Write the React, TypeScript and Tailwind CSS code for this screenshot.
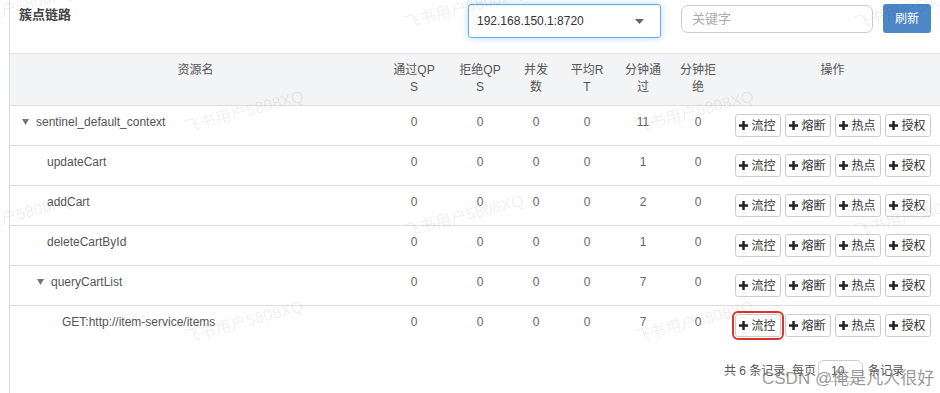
import React from "react";

const FONT = "[font-family:'Liberation_Sans','Noto_Sans_CJK_SC',sans-serif]";

const heads = [
  { label: "资源名", cls: "px-[8px]" },
  { label: "通过QPS", cls: "px-[10px]" },
  { label: "拒绝QPS", cls: "px-[10px]" },
  { label: "并发数", cls: "px-[8px]" },
  { label: "平均RT", cls: "px-[10px]" },
  { label: "分钟通过", cls: "px-[8px]" },
  { label: "分钟拒绝", cls: "px-[8px]" },
  { label: "操作", cls: "px-[8px]" },
];

const widths = [371, 66, 66, 46, 56, 56, 54, 215];

const rows = [
  { name: "sentinel_default_context", pad: "pl-[12px]", parent: true, vals: [0, 0, 0, 0, 11, 0] },
  { name: "updateCart", pad: "pl-[37px]", parent: false, vals: [0, 0, 0, 0, 1, 0] },
  { name: "addCart", pad: "pl-[37px]", parent: false, vals: [0, 0, 0, 0, 2, 0] },
  { name: "deleteCartById", pad: "pl-[37px]", parent: false, vals: [0, 0, 0, 0, 1, 0] },
  { name: "queryCartList", pad: "pl-[27px]", parent: true, vals: [0, 0, 0, 0, 7, 0] },
  { name: "GET:http://item-service/items", pad: "pl-[52px]", parent: false, vals: [0, 0, 0, 0, 7, 0], marked: true },
];

const marks = [
  { x: 14, y: 8 },
  { x: 464, y: 8 },
  { x: 914, y: 8 },
  { x: 244, y: 112 },
  { x: 694, y: 112 },
  { x: 14, y: 216 },
  { x: 464, y: 216 },
  { x: 914, y: 216 },
  { x: 244, y: 322 },
  { x: 694, y: 322 },
];

function Plus() {
  return (
    <svg width="9" height="9" viewBox="0 0 9 9" className="shrink-0">
      <rect x="3.3" y="0" width="2.5" height="9" fill="#222" />
      <rect x="0" y="3.3" width="9" height="2.5" fill="#222" />
    </svg>
  );
}

function OpButton({ label, marked }: { label: string; marked?: boolean }) {
  return (
    <button
      className={
        "h-[23px] w-[46px] flex items-center justify-center gap-[3px] border border-[#ccc] rounded-[3px] bg-white text-[12px] leading-none text-[#333] " +
        (marked ? "outline-2 outline-[#e0322b] outline-offset-[1px]" : "")
      }
    >
      <Plus />
      <span>{label}</span>
    </button>
  );
}

function Triangle() {
  return (
    <svg width="7" height="6" viewBox="0 0 7 6" className="inline-block mr-[7px] align-[1px]">
      <polygon points="0,0 7,0 3.5,6" fill="#777" />
    </svg>
  );
}

export default function App() {
  return (
    <div className={`${FONT} relative h-[393px] w-[940px] overflow-hidden bg-white pl-[9px]`}>
      <div className="h-full border-l border-[#ddd]">
        {/* top bar */}
        <div className="flex h-[53px] items-start">
          <div className="flex-1 pl-[9px] pt-[6px] text-[13px] leading-[18px] font-semibold text-[#444]">簇点链路</div>
          <div className="mt-[4px] flex h-[34px] w-[193px] items-center justify-between rounded-[3px] border border-[#66afe9] pl-[8px] pr-[16px] text-[12px] text-[#333] shadow-[inset_0_1px_1px_rgba(0,0,0,.075),0_0_6px_rgba(102,175,233,.5)]">
            <span>192.168.150.1:8720</span>
            <svg width="9" height="5" viewBox="0 0 9 5">
              <polygon points="0,0 9,0 4.5,5" fill="#666" />
            </svg>
          </div>
          <div className="ml-[20px] mt-[5px] flex h-[28px] w-[192px] items-center rounded-[7px] border border-[#ccc] pl-[10px] text-[13px] text-[#aaa]">
            关键字
          </div>
          <button className="ml-[10px] mr-[9px] mt-[4px] h-[29px] w-[48px] rounded-[3px] bg-[#4d87c7] text-[12px] text-white">
            刷新
          </button>
        </div>

        {/* table */}
        <table className="w-[930px] table-fixed border-separate border-spacing-0 text-[12px] leading-[17px] text-[#555]">
          <colgroup>
            {widths.map((w, i) => (
              <col key={i} style={{ width: w }} />
            ))}
          </colgroup>
          <thead>
            <tr className="bg-[#f3f4f5]">
              {heads.map((h) => (
                <th
                  key={h.label}
                  className={`${h.cls} border-t border-[#e3e3e3] pt-[8px] pb-[9px] h-[52px] align-top text-center font-normal break-all text-[#555]`}
                >
                  {h.label}
                </th>
              ))}
            </tr>
          </thead>
          <tbody>
            {rows.map((r, ri) => (
              <tr key={r.name}>
                <td className={`${r.pad} border-t border-[#ddd] pt-[8px] pb-[8px] align-top whitespace-nowrap`}>
                  {r.parent && <Triangle />}
                  {r.name}
                </td>
                {r.vals.map((v, vi) => (
                  <td key={vi} className="border-t border-[#ddd] pt-[8px] pb-[8px] align-top text-center text-[#666]">
                    {v}
                  </td>
                ))}
                <td className="border-t border-[#ddd] py-[8px] align-top">
                  <div className="flex justify-center gap-[4px]">
                    <OpButton label="流控" marked={r.marked && ri === rows.length - 1} />
                    <OpButton label="熔断" />
                    <OpButton label="热点" />
                    <OpButton label="授权" />
                  </div>
                </td>
              </tr>
            ))}
          </tbody>
        </table>

        {/* pagination */}
        <div className="mt-[15px] flex items-center justify-end pr-[36px] text-[12px] text-[#555]">
          <span>共 6 条记录, 每页</span>
          <span className="ml-[2px] flex h-[22px] w-[45px] items-center rounded-[6px] border border-[#ccc] pl-[12px]">10</span>
          <span className="ml-[5px]">条记录</span>
        </div>
      </div>

      {/* watermarks */}
      {marks.map((m, i) => (
        <span
          key={i}
          className="pointer-events-none absolute -translate-x-1/2 -translate-y-1/2 -rotate-[15deg] whitespace-nowrap text-[16px] text-black/[0.08]"
          style={{ left: m.x, top: m.y }}
        >
          飞书用户5808XQ
        </span>
      ))}
      <span className="pointer-events-none absolute left-[762px] top-[368px] whitespace-nowrap text-[17px] leading-[22px] text-[rgba(120,120,120,0.75)]">
        CSDN @俺是凡人很好
      </span>
    </div>
  );
}
